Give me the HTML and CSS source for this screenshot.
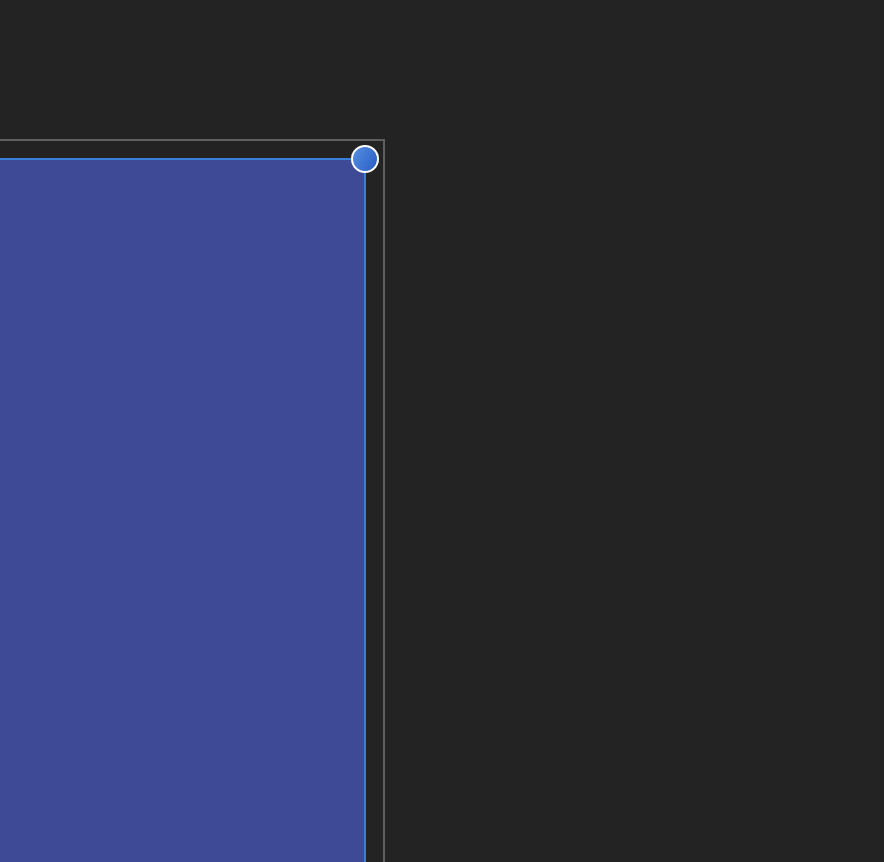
FILE: index.html
```html
<!DOCTYPE html>
<html>
<head>
	<title>Canvas</title>
	<meta charset="UTF-8">
	<link rel="stylesheet" href="styles.css">
</head>
<body>
	<div class="canvas">
		<div class="frame">
			<div class="shape selected">
				<div class="handle"></div>
			</div>
		</div>
	</div>
</body>
</html>
```

FILE: styles.css
```css
html, body {
	margin: 0;
	padding: 0;
	height: 100%;
	overflow: hidden;
	background: #232323;
	font-family: "Liberation Sans", Arial, sans-serif;
}

.canvas {
	padding-top: 139px;
	height: 100%;
	box-sizing: border-box;
	overflow: hidden;
}

.frame {
	width: 501px;
	margin-left: -116px;
	height: 760px;
	border: 2px solid #5f5f5f;
	padding: 17px 17px 0 0;
	box-sizing: border-box;
}

.shape {
	position: relative;
	height: 720px;
	background: #3e4a96;
	border: 2px solid #3a7fd8;
}

.handle {
	position: absolute;
	top: -15px;
	right: -15px;
	width: 24px;
	height: 24px;
	border-radius: 50%;
	border: 2px solid #fff;
	background: linear-gradient(120deg, #5590e2, #2a5cc4);
}
```
